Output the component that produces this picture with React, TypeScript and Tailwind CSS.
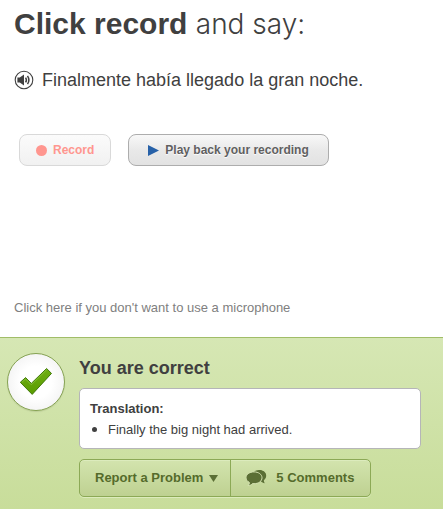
import React from "react";

function SpeakerIcon() {
  return (
    <svg viewBox="0 0 20 20" className="size-5" aria-hidden="true">
      <circle cx="10" cy="10" r="8.8" fill="#fff" stroke="#404040" strokeWidth="1.1" />
      <path d="M3.4 7.4h2.400L10 4.400v11.200l-4.200-3H3.400z" fill="#404040" />
      <path d="M11.6 7.6q1.6 2.4 0 4.8M13.5 5.8q2.8 4.2 0 8.4" fill="none" stroke="#404040" strokeWidth="1.5" />
    </svg>
  );
}

function CheckIcon() {
  return (
    <svg viewBox="0 0 34 30" className="h-[30px] w-[34px]" aria-hidden="true">
      <defs>
        <linearGradient id="tick" x1="0" y1="0" x2="0" y2="1">
          <stop offset="0" stopColor="#6fae14" />
          <stop offset="1" stopColor="#5a9c00" />
        </linearGradient>
      </defs>
      <path
        d="M1.300 15.300 6.600 10.600 12.300 16.400 27.600 1.500 32.500 6.400 13.200 27.400z"
        fill="url(#tick)"
        stroke="#427a0c"
        strokeWidth="1"
        strokeLinejoin="round"
      />
      <path d="M3 15.300 6.500 12 12.300 17.800 27.600 2.900" fill="none" stroke="#8cc63a" strokeWidth="0.8" />
    </svg>
  );
}

function CommentsIcon() {
  return (
    <svg viewBox="0 0 22 18" className="h-[18px] w-[22px]" aria-hidden="true">
      <path d="M13 1c4.200 0 7.200 2.400 7.200 5.600 0 2-.9 3.600-2.400 4.800.1 1.200.4 2 1 2.800-1.700-.2-2.900-.8-3.800-1.700z" fill="#5b6f35" />
      <ellipse cx="12.800" cy="6.200" rx="6.800" ry="5.200" fill="#5b6f35" />
      <path
        d="M8 2.900c4.500 0 8 2.500 8 5.900s-3.500 5.900-8 5.900c-.5 0-1 0-1.400-.1-1.200 1.300-2.700 1.900-4.500 2 .9-.9 1.300-1.900 1.300-3.100C1.300 12.400 0 10.700 0 8.800c0-3.400 3.500-5.900 8-5.900z"
        fill="#5b6f35"
        stroke="#d5e3b2"
        strokeWidth="1"
      />
    </svg>
  );
}

export default function App() {
  return (
    <main className="flex min-h-screen flex-col bg-white font-['Liberation_Sans',Arial,sans-serif] text-[#404040]">
      <section className="px-3.5 pt-1">
        <h1 className="text-[30px] leading-10 font-bold">
          Click record <span className="font-['Inter',sans-serif] text-[28px] font-light">and say:</span>
        </h1>
        <div className="mt-6 flex items-center gap-2">
          <button type="button" aria-label="Listen" className="shrink-0">
            <SpeakerIcon />
          </button>
          <p className="text-lg leading-6">Finalmente había llegado la gran noche.</p>
        </div>
        <div className="mt-[42px] flex gap-[17px] px-[5px] text-xs font-bold">
          <button
            type="button"
            disabled
            className="flex h-8 items-center gap-1.5 rounded-lg border border-[#d9d9d9] bg-linear-to-b from-[#fbfbfb] to-[#f1f1f1] px-4 text-[#ff968f]"
          >
            <span className="size-[11px] rounded-full bg-[#ff968f]" />
            Record
          </button>
          <button
            type="button"
            className="flex h-8 items-center gap-1.5 rounded-lg border border-[#adadad] bg-linear-to-b from-[#f8f8f8] via-[#e9e9e9] to-[#e2e2e2] px-[19px] text-[#606060] [text-shadow:0_1px_1px_#fff]"
          >
            <svg viewBox="0 0 11 11" className="size-[11px]" aria-hidden="true">
              <path d="M0 0 11 5.500 0 11z" fill="#2761a8" />
            </svg>
            Play back your recording
          </button>
        </div>
        <a href="#skip" className="mt-[132px] mb-[19px] block text-[13px] leading-5 text-[#808080]">
          Click here if you don't want to use a microphone
        </a>
      </section>

      <section className="flex grow gap-3.5 border-t border-[#a1bd68] bg-linear-to-b from-[#d6e7b4] to-[#c8dd9a] pr-[22px] pb-3 pl-[7px]">
        <div className="mt-[15px] flex size-[58px] shrink-0 items-center justify-center rounded-full border border-[#86a254] bg-radial from-white from-40% to-[#ececec] shadow-[0_1px_1px_#bdce98]">
          <CheckIcon />
        </div>
        <div className="min-w-0 grow">
          <h2 className="mt-[18px] text-lg leading-6 font-bold">You are correct</h2>
          <div className="mt-2 rounded-[5px] border border-[#b5b5b8] bg-white px-2.5 pt-[9px] pb-2 text-[13px] leading-[21px]">
            <h3 className="font-bold">Translation:</h3>
            <ul>
              <li className="flex items-center gap-[11px] pl-0.5">
                <span className="size-[5px] rounded-full bg-[#404040]" />
                Finally the big night had arrived.
              </li>
            </ul>
          </div>
          <div className="mt-2.5 inline-flex h-[38px] rounded-[5px] border border-[#8ca956] bg-linear-to-b from-[#d3e4ae] to-[#bed191] text-[13px] font-bold text-[#556b2b] shadow-[0_1px_0_#dcebbd,inset_0_1px_0_#dcebbd] [text-shadow:0_1px_0_#dcebbd]">
            <button type="button" className="flex items-center gap-1.5 border-r border-[#8ca956] pr-3 pl-[15px]">
              Report a Problem
              <svg viewBox="0 0 9 7" className="h-[7px] w-[9px]" aria-hidden="true">
                <path d="M0 0h9L4.500 7z" fill="#5b6f35" />
              </svg>
            </button>
            <button type="button" className="flex items-center gap-2 pr-4 pl-[15px]">
              <CommentsIcon />
              5 Comments
            </button>
          </div>
        </div>
      </section>
    </main>
  );
}
